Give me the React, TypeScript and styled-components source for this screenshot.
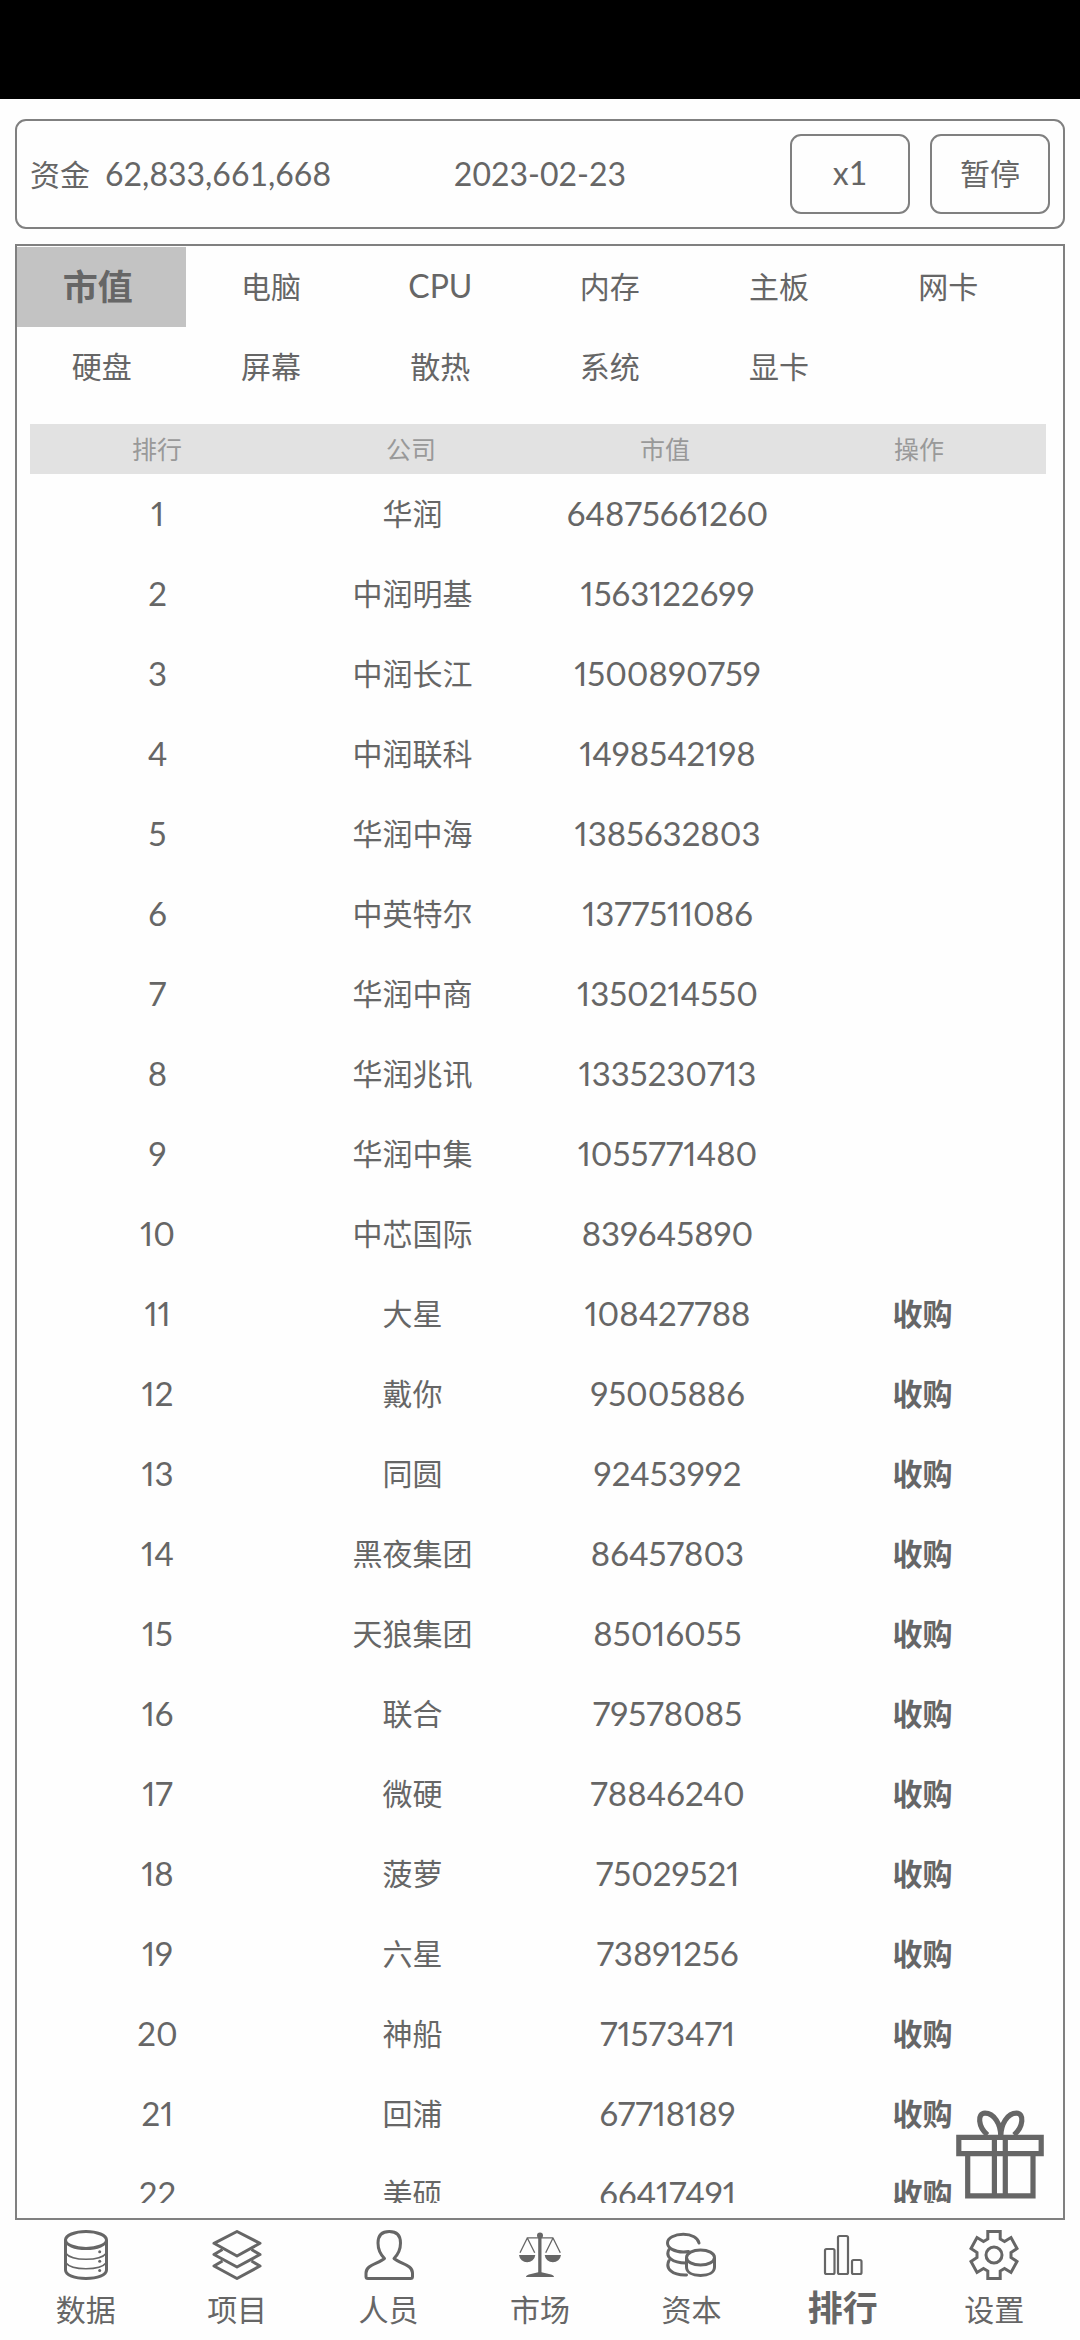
import React, { useState } from "react";
import styled, { createGlobalStyle, css } from "styled-components";

const ink = "#666666";
const line = "#808080";

const GlobalStyle = createGlobalStyle`
  *, *::before, *::after { box-sizing: border-box; }
  body {
    margin: 0;
    background: #fefefe;
    color: ${ink};
    font-family: Lato, "Noto Sans CJK SC", sans-serif;
    font-size: 30px;
    line-height: 40px;
  }
  button {
    margin: 0;
    padding: 0;
    border: 0;
    background: none;
    color: inherit;
    font: inherit;
    cursor: pointer;
  }
`;

const Screen = styled.div`
  display: flex;
  flex-direction: column;
  height: 100vh;
`;

const StatusBar = styled.div`
  flex: none;
  height: 99px;
  background: #000000;
`;

const Main = styled.main`
  position: relative;
  display: flex;
  flex: 1;
  flex-direction: column;
  gap: 15px;
  min-height: 0;
  padding: 20px 15px 0;
`;

const TopBar = styled.header`
  display: grid;
  flex: none;
  grid-template-columns: 1fr auto 1fr;
  align-items: center;
  padding: 13px;
  border: 2px solid ${line};
  border-radius: 11px;
`;

const Funds = styled.div`
  display: flex;
  align-items: center;
  gap: 15px;
`;

const Figure = styled.span`
  font-size: 32px;
`;

const ListFigure = styled.span`
  font-size: 33px;
  font-variant-numeric: proportional-nums;
`;

const Controls = styled.div`
  display: flex;
  justify-content: flex-end;
  gap: 20px;
`;

const ControlButton = styled.button`
  width: 120px;
  height: 80px;
  padding-bottom: 2px;
  border: 2px solid ${line};
  border-radius: 11px;
`;

const Panel = styled.section`
  display: flex;
  flex: 1;
  flex-direction: column;
  min-height: 0;
  padding: 1px 0 15px;
  border: 2px solid ${line};
`;

const Tabs = styled.div`
  display: grid;
  flex: none;
  grid-template-columns: repeat(6, 1fr);
  padding-right: 30px;
`;

const Tab = styled.button<{ $active: boolean }>`
  height: 80px;
  padding-bottom: 2px;
  ${(p) =>
    p.$active &&
    css`
      padding-right: 8px;
      background: #c3c3c3;
      font-size: 35px;
      font-weight: 700;
    `}
`;

const Scroller = styled.div`
  flex: 1;
  min-height: 0;
  margin: 17px 13px 0;
  overflow-y: auto;
  scrollbar-width: none;
`;

const Table = styled.table`
  display: block;
  width: 100%;
`;

const Head = styled.thead`
  position: sticky;
  top: 0;
  display: block;
  margin-right: 4px;
  background: #e2e2e2;
  color: #999999;
`;

const Body = styled.tbody`
  display: block;
`;

const Row = styled.tr`
  display: grid;
  grid-template-columns: repeat(4, 1fr);
`;

const HeadCell = styled.th`
  padding: 5px 0;
  font-size: 25px;
  font-weight: 400;
  text-align: center;
`;

const Cell = styled.td`
  height: 80px;
  padding: 19px 0 21px;
  text-align: center;
  white-space: nowrap;
`;

const BuyButton = styled.button`
  font-weight: 700;
`;

const GiftButton = styled.button`
  position: absolute;
  right: 36px;
  bottom: 20px;
  width: 88px;
  height: 90px;
  svg {
    display: block;
  }
`;

const Nav = styled.nav`
  display: grid;
  flex: none;
  grid-template-columns: repeat(7, 1fr);
  padding: 10px 10px 11px;
`;

const NavButton = styled.button`
  display: flex;
  flex-direction: column;
  align-items: center;
  gap: 9px;
`;

const NavLabel = styled.span<{ $active: boolean }>`
  height: 40px;
  b {
    font-weight: ${(p) => (p.$active ? 700 : 400)};
    font-size: ${(p) => (p.$active ? "35px" : "30px")};
    line-height: 0;
  }
`;

const Icon = ({ width = 3, children }: { width?: number; children: React.ReactNode }) => (
  <svg
    width="50"
    height="50"
    viewBox="0 0 50 50"
    fill="none"
    stroke={ink}
    strokeWidth={width}
    strokeLinejoin="round"
    aria-hidden="true"
  >
    {children}
  </svg>
);

const DataIcon = () => (
  <Icon>
    <ellipse cx="25" cy="10" rx="20.5" ry="8.5" />
    <path d="M4.5 10V40C4.5 45 13.5 48.5 25 48.5S45.5 45 45.5 40V10" />
    <path strokeWidth="1.6" d="M5 23.5C8 27.5 16 29.3 25 29.3S42 27.5 45 23.5M5 33C8 37 16 38.7 25 38.7S42 37 45 33" />
    <g fill={ink} stroke="none">
      <circle cx="38.7" cy="21.7" r="1.5" />
      <circle cx="38.7" cy="31.3" r="1.5" />
      <circle cx="38.7" cy="40.4" r="1.5" />
    </g>
  </Icon>
);

const LayersIcon = () => (
  <Icon>
    <path d="M25 1.5L48 13.3L25 26L2 13.3Z" />
    <path d="M10.5 19.5L2 24.5L25 37L48 24.5L39.5 19.5" />
    <path d="M10.5 31L2 36L25 48.5L48 36L39.5 31" />
  </Icon>
);

const PersonIcon = () => (
  <Icon>
    <path d="M20.5 28.5C16 24 14 20 14 13C14 5 18 1.5 25.3 1.5S36.5 5 36.5 13C36.5 20 34.5 24 30 28.5C37 34 48.5 35 48.5 43V46.5Q48.5 48.5 46.5 48.5H4Q2 48.5 2 46.5V43C2 35 13.5 34 20.5 28.5Z" />
  </Icon>
);

const ScalesIcon = () => (
  <Icon width={1.3}>
    <path d="M11.7 7.8H38.3M12.3 8L5 22.7M12.3 8L19.7 22.7M38 8L30.7 22.7M38 8L45.3 22.7" />
    <g fill={ink} stroke="none">
      <circle cx="25" cy="5.6" r="3" />
      <path d="M23.2 6H26.5V42.3L34 44Q39 45 39 47H11Q11 45 16 44L23.2 42.3Z" />
      <path d="M4 25H20.3A8.2 8.2 0 0 1 4 25ZM29.7 25H46A8.2 8.2 0 0 1 29.7 25Z" />
    </g>
  </Icon>
);

const CoinsIcon = () => (
  <Icon>
    <g strokeLinecap="round">
      <path d="M33 13C32 8 26 4.3 17.3 4.3S1.5 8 1.5 13S8.5 22 17.3 22Q20 22 22.5 21.5" />
      <path d="M3 19.5C-1 26.5 6 33 20 33M3 30.5C-1 38.5 6 45.5 20.5 45" />
    </g>
    <ellipse cx="34.5" cy="27.5" rx="14" ry="7.6" />
    <path d="M20.5 28V37C20.5 42.5 26.5 45.4 34.5 45.4S48.5 42.5 48.5 37V28" />
  </Icon>
);

const BarsIcon = () => (
  <Icon width={2.2}>
    <rect x="7" y="19" width="9.5" height="25" rx="1.5" />
    <rect x="20" y="6" width="10" height="38" rx="1.5" />
    <rect x="34" y="30" width="9.5" height="14" rx="1.5" />
  </Icon>
);

const GearIcon = () => (
  <Icon>
    <g strokeLinejoin="miter">
      <path d="M18.8 1.5H31.2V9L35.5 11.5L42 7.5L48 18.5L42 22.5V27.5L48 31.5L42 42.5L35.5 38.5L31.2 41V48.5H18.8V41L14.5 38.5L8 42.5L2 31.5L8 27.5V22.5L2 18.5L8 7.5L14.5 11.5L18.8 9Z" />
      <circle cx="25" cy="25" r="8" />
    </g>
  </Icon>
);

const GiftIcon = () => (
  <svg width="88" height="90" viewBox="0 0 88 90" fill="none" stroke={ink} strokeWidth="5.2" aria-hidden="true">
    <path d="M2.8 27.4H85.2V43.6H2.8ZM11.7 44V85.9H77V44M38.4 27V86M49.3 27V86" />
    <path d="M44.8 26.5C44.8 14 38 3.2 29 3.2C21 3.2 22 17 31.5 25M44.8 26.5C44.8 14 51.5 3.2 60.5 3.2C68.5 3.2 67.5 17 58 25" />
  </svg>
);

const tabs = ["市值", "电脑", "CPU", "内存", "主板", "网卡", "硬盘", "屏幕", "散热", "系统", "显卡"];

const companies: [string, number][] = [
  ["华润", 64875661260],
  ["中润明基", 1563122699],
  ["中润长江", 1500890759],
  ["中润联科", 1498542198],
  ["华润中海", 1385632803],
  ["中英特尔", 1377511086],
  ["华润中商", 1350214550],
  ["华润兆讯", 1335230713],
  ["华润中集", 1055771480],
  ["中芯国际", 839645890],
  ["大星", 108427788],
  ["戴你", 95005886],
  ["同圆", 92453992],
  ["黑夜集团", 86457803],
  ["天狼集团", 85016055],
  ["联合", 79578085],
  ["微硬", 78846240],
  ["菠萝", 75029521],
  ["六星", 73891256],
  ["神船", 71573471],
  ["回浦", 67718189],
  ["美硕", 66417491],
];

/* The ten largest companies cannot be bought. */
const lockedCount = 10;

const navItems = [
  { label: "数据", Glyph: DataIcon },
  { label: "项目", Glyph: LayersIcon },
  { label: "人员", Glyph: PersonIcon },
  { label: "市场", Glyph: ScalesIcon },
  { label: "资本", Glyph: CoinsIcon },
  { label: "排行", Glyph: BarsIcon },
  { label: "设置", Glyph: GearIcon },
];

export default function App() {
  const [tab, setTab] = useState("市值");
  const [page, setPage] = useState("排行");

  return (
    <>
      <GlobalStyle />
      <Screen>
        <StatusBar />
        <Main>
          <TopBar>
            <Funds>
              <span>资金</span>
              <Figure>62,833,661,668</Figure>
            </Funds>
            <Figure>2023-02-23</Figure>
            <Controls>
              <ControlButton type="button">
                <Figure>x1</Figure>
              </ControlButton>
              <ControlButton type="button">暂停</ControlButton>
            </Controls>
          </TopBar>
          <Panel>
            <Tabs>
              {tabs.map((name) => (
                <Tab key={name} type="button" $active={name === tab} onClick={() => setTab(name)}>
                  {name === "CPU" ? <Figure>{name}</Figure> : name}
                </Tab>
              ))}
            </Tabs>
            <Scroller>
              <Table>
                <Head>
                  <Row>
                    <HeadCell scope="col">排行</HeadCell>
                    <HeadCell scope="col">公司</HeadCell>
                    <HeadCell scope="col">市值</HeadCell>
                    <HeadCell scope="col">操作</HeadCell>
                  </Row>
                </Head>
                <Body>
                  {companies.map(([name, value], i) => (
                    <Row key={name}>
                      <Cell>
                        <ListFigure>{i + 1}</ListFigure>
                      </Cell>
                      <Cell>{name}</Cell>
                      <Cell>
                        <ListFigure>{value}</ListFigure>
                      </Cell>
                      <Cell>{i >= lockedCount && <BuyButton type="button">收购</BuyButton>}</Cell>
                    </Row>
                  ))}
                </Body>
              </Table>
            </Scroller>
          </Panel>
          <GiftButton type="button" aria-label="礼物">
            <GiftIcon />
          </GiftButton>
        </Main>
        <Nav>
          {navItems.map(({ label, Glyph }) => (
            <NavButton key={label} type="button" onClick={() => setPage(label)}>
              <Glyph />
              <NavLabel $active={label === page}>
                <b>{label}</b>
              </NavLabel>
            </NavButton>
          ))}
        </Nav>
      </Screen>
    </>
  );
}
